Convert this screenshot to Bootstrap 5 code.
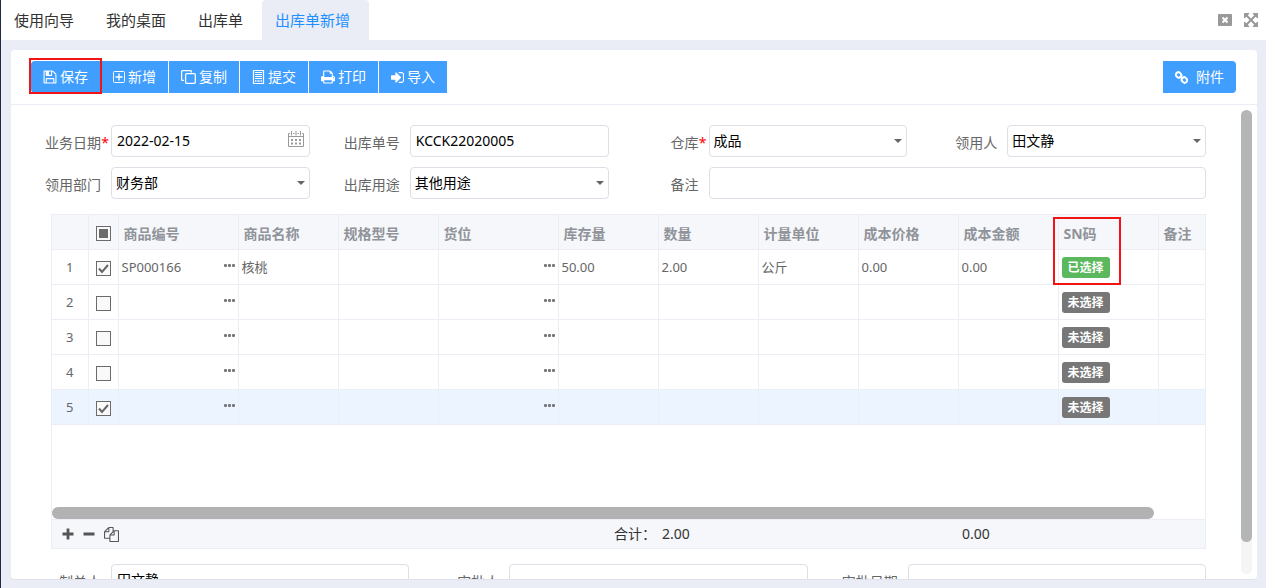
<!DOCTYPE html>
<html lang="zh-CN">
<head>
<meta charset="utf-8">
<meta name="viewport" content="width=device-width, initial-scale=1">
<title>出库单新增</title>
<link href="https://cdn.jsdelivr.net/npm/bootstrap@5.3.0/dist/css/bootstrap.min.css" rel="stylesheet">
<style>
body{font-family:"Noto Sans","Noto Sans CJK SC",sans-serif;font-size:14px;line-height:20px;background:#eaedf6;color:#333;border-left:1px solid #1f2a48}
.tabbar{height:40px;background:#fff}
.tabbar .nav-link{font-size:15px;line-height:20px;padding:10px 19px 10px 13px;color:#333;border-radius:4px 4px 0 0}
.tabbar .nav-link.active{background:#eaedf6;color:#1e90ff}
.tool{border:0;background:none;padding:0;display:flex;color:#999}
.panel{margin:10px 9px 8px 10px;background:#fff;border-radius:4px;min-height:0;overflow:hidden;border-bottom:1px solid #dfe2ea}
.actions{padding:11px 21px 11px 20px;border-bottom:1px solid #eaedf6}
.actions .btn{display:flex;align-items:center;gap:3px;height:32px;padding:0 12px;font-size:14px;line-height:20px;color:#fff;background:#409eff;border:0;border-right:1px solid #fff;border-radius:0}
.actions .btn:first-child{border-radius:4px 0 0 4px}
.actions .btn:last-child{border-right:0}
.actions .attach{gap:8px;border-radius:0 4px 4px 0!important}
svg{display:block;flex:none}
.marker{position:absolute;border:2px solid #f21414;pointer-events:none;z-index:3}
.mk-save{left:-2px;top:-3px;width:73px;height:36px}
.mk-sn{left:-6px;top:2px;width:68px;height:68px}
.content-area{min-height:0;overflow:hidden}
.form-zone{padding-top:20px}
.fieldrow{margin-bottom:10px}
.fieldrow label,.foot{width:100px;flex:none;text-align:right;padding:8px 10px 4px 0;color:#666;position:relative}
.req{position:absolute;right:2px;color:#f00}
.form-control,.form-select{height:32px;border:1px solid #dcdfe6;border-radius:4px;font-size:14px;line-height:20px;color:#000;padding:4px 5px 6px;min-width:0}
.form-select{padding:5px 20px 5px 4px;background:#fff url("data:image/svg+xml,%3Csvg xmlns='http://www.w3.org/2000/svg' viewBox='0 0 8 4'%3E%3Cpath d='M0 0h8L4 4z' fill='%23666'/%3E%3C/svg%3E") no-repeat right 4px center/8px 4px}
.cal{position:absolute;right:6px;top:6px;border:0;background:none;padding:0;color:#999}
.sheet{margin:15px 0 15px 40px;border:1px solid #ebeef5}
.sheet-body{height:292px}
.sheet table{table-layout:fixed;width:100%;margin:0;color:#666;font-size:13px}
.sheet th,.sheet td{height:35px;padding:0 3px;border-right:1px solid #ebeef5;border-bottom:1px solid #ebeef5;vertical-align:middle;line-height:20px;white-space:nowrap}
.sheet tr>:last-child{border-right:0}
.sheet th{height:34px;background:#f5f7fa;color:#909399;font-size:14px;padding:4px 5px 0;font-weight:700;position:relative}
.sheet .picked td{background:#ecf5ff}
.sheet .pick{padding:3px 0 0;text-align:center}
.sheet .form-check-input{display:block;width:15px;height:15px;margin:0 auto;border:1px solid #6b6b6b;border-radius:0;background-color:#f9f9f9;background-size:100%}
.sheet .form-check-input:checked{background-image:url("data:image/svg+xml,%3Csvg xmlns='http://www.w3.org/2000/svg' viewBox='0 0 13 13'%3E%3Cpath d='M2 6.5 5 10l6-7' fill='none' stroke='%23666' stroke-width='2'/%3E%3C/svg%3E")}
.sheet .form-check-input.partial{background-image:linear-gradient(#6b6b6b,#6b6b6b);background-size:9px 9px;background-position:center;background-repeat:no-repeat}
.dots{border:0;background:none;padding:0 0 3px;color:#777}
.sn{border:0;border-radius:3px;background:#777;color:#fff;font-size:12px;line-height:20px;font-weight:700;padding:1px 6px 0;display:block;margin-top:2px}
.sn.done{background:#5cb85c}
.hbar{height:12px;width:1102px;max-width:96%;background:#b2b2b2;border-radius:6px}
.sums{height:29px;background:#f5f7fa;border-top:1px solid #ebeef5;display:grid;grid-template-columns:506px 100px 300px 1fr;align-items:center;color:#333}
.sums .tools{padding-left:10px;gap:9px;color:#555}
.sums button{border:0;background:none;padding:0;color:inherit}
.sums .total{padding-right:2px}
.vtrack{width:11px;margin:5px 5px 5px 35px;border-radius:6px;background:#f5f5f5;flex:none}
.vthumb{height:432px;border-radius:6px;background:#b4b5b7}
</style>
</head>
<body class="vh-100 d-flex flex-column overflow-hidden">
<header class="tabbar d-flex justify-content-between align-items-center">
  <nav class="nav flex-nowrap">
    <a class="nav-link" href="#">使用向导</a>
    <a class="nav-link" href="#">我的桌面</a>
    <a class="nav-link" href="#">出库单</a>
    <a class="nav-link active" href="#" aria-current="page">出库单新增</a>
  </nav>
  <div class="d-flex align-items-center pe-2" style="gap:12px">
    <button class="tool" type="button" aria-label="关闭"><svg width="14" height="12" viewBox="0 0 14 12"><rect width="14" height="12" rx="1" fill="#999"/><path d="M4.500 3.500l5 5m0-5l-5 5" stroke="#fff" stroke-width="2"/></svg></button>
    <button class="tool" type="button" aria-label="全屏"><svg width="14" height="14" viewBox="128 128 1536 1536" fill="currentColor"><path d="M1411 541l-355 355 355 355 144-144q29-31 70-14 39 17 39 59v448q0 26-19 45t-45 19h-448q-42 0-59-40-17-39 14-69l144-144-355-355-355 355 144 144q31 30 14 69-17 40-59 40h-448q-26 0-45-19t-19-45v-448q0-42 40-59 39-17 69 14l144 144 355-355-355-355-144 144q-19 19-45 19-12 0-24-5-40-17-40-59v-448q0-26 19-45t45-19h448q42 0 59 40 17 39-14 69l-144 144 355 355 355-355-144-144q-31-30-14-69 17-40 59-40h448q26 0 45 19t19 45v448q0 42-39 59-13 5-25 5-26 0-45-19z"/></svg></button>
  </div>
</header>

<main class="panel flex-grow-1 d-flex flex-column">
  <div class="actions d-flex justify-content-between">
    <div class="d-flex position-relative">
      <button class="btn" type="button"><svg width="14" height="14" viewBox="64 64 1664 1664" fill="currentColor"><path d="M512 1536h768v-384h-768v384zm896 0h128v-896q0-14-10-38.500t-20-34.500l-281-281q-10-10-34-20t-39-10v416q0 40-28 68t-68 28h-576q-40 0-68-28t-28-68v-416h-128v1280h128v-416q0-40 28-68t68-28h832q40 0 68 28t28 68v416zm-384-928v-320q0-13-9.500-22.500t-22.500-9.500h-192q-13 0-22.500 9.500t-9.500 22.500v320q0 13 9.500 22.500t22.500 9.500h192q13 0 22.500-9.500t9.500-22.500zm640 32v928q0 40-28 68t-68 28h-1344q-40 0-68-28t-28-68v-1344q0-40 28-68t68-28h928q40 0 88 20t76 48l280 280q28 28 48 76t20 88z"/></svg>保存</button>
      <button class="btn" type="button"><svg width="12" height="12" viewBox="0 0 12 12" fill="none" stroke="currentColor"><rect x=".5" y=".5" width="11" height="11" rx="1"/><path d="M6 2.500v7M2.500 6h7" stroke-width="1.400"/></svg>新增</button>
      <button class="btn" type="button"><svg width="15" height="14" viewBox="0 0 15 14" fill="none" stroke="currentColor" stroke-width="1.300"><rect x="4.600" y="3.600" width="9.700" height="9.700" rx="1"/><path d="M3 10.400H1.600a1 1 0 0 1-1-1V1.600a1 1 0 0 1 1-1h7.800a1 1 0 0 1 1 1v1"/></svg>复制</button>
      <button class="btn" type="button"><svg width="13" height="14" viewBox="0 0 13 14" fill="none" stroke="currentColor"><path d="M1.500 0v13.500h10V0M1 .5h11" stroke-width="1.200"/><path d="M3 2.500h7M3 4.500h7M3 6.500h7M3 8.500h7" stroke-width="1.200"/><path d="M3 11h1.500m1 0h2m1 0H10" stroke-width="1.600"/></svg>提交</button>
      <button class="btn" type="button"><svg width="14" height="14" viewBox="64 64 1664 1664" fill="currentColor"><path d="M448 1536h896v-256h-896v256zm0-640h896v-384h-160q-40 0-68-28t-28-68v-160h-640v640zm1152 64q0-26-19-45t-45-19-45 19-19 45 19 45 45 19 45-19 19-45zm128 0v416q0 13-9.500 22.500t-22.500 9.500h-224v160q0 40-28 68t-68 28h-960q-40 0-68-28t-28-68v-160h-224q-13 0-22.500-9.500t-9.500-22.500v-416q0-79 56.500-135.500t135.500-56.500h64v-544q0-40 28-68t68-28h672q40 0 88 20t76 48l152 152q28 28 48 76t20 88v256h64q79 0 135.500 56.500t56.500 135.500z"/></svg>打印</button>
      <button class="btn" type="button"><svg width="13" height="13" viewBox="128 128 1536 1536" fill="currentColor"><path d="M1312 896q0 26-19 45l-544 544q-19 19-45 19t-45-19-19-45v-288h-448q-26 0-45-19t-19-45v-384q0-26 19-45t45-19h448v-288q0-26 19-45t45-19 45 19l544 544q19 19 19 45zm352-352v704q0 119-84.500 203.500t-203.500 84.500h-320q-13 0-22.500-9.500t-9.500-22.500q0-4-1-20t-.5-26.500 3-23.500 10-19.500 20.500-6.500h320q66 0 113-47t47-113v-704q0-66-47-113t-113-47h-312l-11.500-1-11.500-3-8-5.500-7-9-2-13.500q0-4-1-20t-.5-26.500 3-23.500 10-19.500 20.500-6.500h320q119 0 203.500 84.500t84.500 203.500z"/></svg>导入</button>
      <span class="marker mk-save"></span>
    </div>
    <div><button class="btn attach" type="button"><svg width="13" height="13" viewBox="0 0 13 13" fill="none" stroke="currentColor" stroke-width="2"><rect x="1.200" y="1.200" width="4.800" height="5.600" rx="2.200" transform="rotate(-45 3.600 4)"/><rect x="7" y="6.200" width="4.800" height="5.600" rx="2.200" transform="rotate(-45 9.400 9)"/><path d="M5 5l3 3"/></svg>附件</button></div>
  </div>

  <div class="content-area flex-grow-1 d-flex">
    <form class="form-zone flex-grow-1">
      <div class="row g-0 fieldrow">
        <div class="col-3 d-flex"><label for="f1">业务日期<span class="req">*</span></label><div class="position-relative flex-grow-1"><input id="f1" class="form-control" value="2022-02-15"><button class="cal" type="button" aria-label="选择日期"><svg width="16" height="17" viewBox="0 0 16 17" fill="none" stroke="currentColor"><path d="M2 2.500H.5v13h15v-13H14M5 2.500h1.500M9.500 2.500H11M3.500 0v4.500M8 0v4.500M12.500 0v4.500M.5 5.500h15"/><path d="M3 9h10M3 12.500h10" stroke-width="2" stroke-dasharray="2 2"/></svg></button></div></div>
        <div class="col-3 d-flex"><label for="f2">出库单号</label><input id="f2" class="form-control" value="KCCK22020005"></div>
        <div class="col-3 d-flex"><label for="f3">仓库<span class="req">*</span></label><select id="f3" class="form-select"><option>成品</option></select></div>
        <div class="col-3 d-flex"><label for="f4">领用人</label><select id="f4" class="form-select"><option>田文静</option></select></div>
      </div>
      <div class="row g-0 fieldrow">
        <div class="col-3 d-flex"><label for="f5">领用部门</label><select id="f5" class="form-select"><option>财务部</option></select></div>
        <div class="col-3 d-flex"><label for="f6">出库用途</label><select id="f6" class="form-select"><option>其他用途</option></select></div>
        <div class="col-6 d-flex"><label for="f7">备注</label><input id="f7" class="form-control"></div>
      </div>

      <div class="sheet">
        <div class="sheet-body">
          <table>
            <colgroup><col width="36"><col width="30"><col width="120"><col width="100"><col width="100"><col width="120"><col width="100"><col width="100"><col width="100"><col width="100"><col width="100"><col width="100"><col></colgroup>
            <thead><tr><th></th><th class="pick"><input class="form-check-input partial" type="checkbox" aria-label="全选"></th><th>商品编号</th><th>商品名称</th><th>规格型号</th><th>货位</th><th>库存量</th><th>数量</th><th>计量单位</th><th>成本价格</th><th>成本金额</th><th>SN码<span class="marker mk-sn"></span></th><th>备注</th></tr></thead>
            <tbody id="rows"></tbody>
          </table>
        </div>
        <div class="hbar"></div>
        <div class="sums">
          <div class="tools d-flex align-items-center">
            <button type="button" aria-label="增行"><svg width="12" height="12" viewBox="0 0 12 12"><path d="M6 .5v11M.5 6h11" stroke="currentColor" stroke-width="2.800"/></svg></button>
            <button type="button" aria-label="删行"><svg width="12" height="12" viewBox="0 0 12 12"><path d="M.5 6h11" stroke="currentColor" stroke-width="2.800"/></svg></button>
            <button type="button" aria-label="复制行"><svg width="15" height="15" viewBox="0 0 1792 1792" fill="currentColor"><path d="M1696 384q40 0 68 28t28 68v1216q0 40-28 68t-68 28h-960q-40 0-68-28t-28-68v-288h-544q-40 0-68-28t-28-68v-672q0-40 20-88t48-76l408-408q28-28 76-48t88-20h416q40 0 68 28t28 68v328q68-40 128-40h416zm-544 213l-299 299h299v-299zm-640-384l-299 299h299v-299zm196 647l316-316v-416h-384v416q0 40-28 68t-68 28h-416v640h512v-256q0-40 20-88t48-76zm956 804v-1152h-384v416q0 40-28 68t-68 28h-416v640h896z"/></svg></button>
          </div>
          <div class="text-end total">合计：</div>
          <div class="ps-1">2.00</div>
          <div class="ps-1">0.00</div>
        </div>
      </div>

      <div class="row g-0">
        <div class="col-4 d-flex"><label class="foot" for="f8">制单人</label><input id="f8" class="form-control" value="田文静"></div>
        <div class="col-4 d-flex"><label class="foot" for="f9">审批人</label><input id="f9" class="form-control"></div>
        <div class="col-4 d-flex"><label class="foot" for="f10">审批日期</label><input id="f10" class="form-control"></div>
      </div>
    </form>
    <div class="vtrack"><div class="vthumb"></div></div>
  </div>
</main>
<script>
const dots = '<button type="button" class="dots" aria-label="选择"><svg width="11" height="3" viewBox="0 0 11 3" fill="currentColor"><rect width="3" height="3" rx="1"/><rect x="4" width="3" height="3" rx="1"/><rect x="8" width="3" height="3" rx="1"/></svg></button>';
const data = [
  {checked: 1, cells: ['SP000166', '核桃', '', '', '50.00', '2.00', '公斤', '0.00', '0.00'], done: 1},
  {}, {}, {}, {checked: 1, picked: 1}
];
document.getElementById('rows').innerHTML = data.map((r, i) => {
  const c = r.cells || Array(9).fill('');
  const tds = c.map((v, k) => k === 0 || k === 3
    ? `<td><div class="d-flex justify-content-between align-items-center"><span>${v}</span>${dots}</div></td>`
    : `<td>${v}</td>`).join('');
  return `<tr class="${r.picked ? 'picked' : ''}"><td class="text-center">${i + 1}</td><td class="pick"><input class="form-check-input" type="checkbox" aria-label="第${i + 1}行" ${r.checked ? 'checked' : ''}></td>${tds}<td><button type="button" class="sn ${r.done ? 'done' : ''}">${r.done ? '已选择' : '未选择'}</button></td><td></td></tr>`;
}).join('');
</script>
<script src="https://cdn.jsdelivr.net/npm/bootstrap@5.3.0/dist/js/bootstrap.bundle.min.js"></script>
</body>
</html>
